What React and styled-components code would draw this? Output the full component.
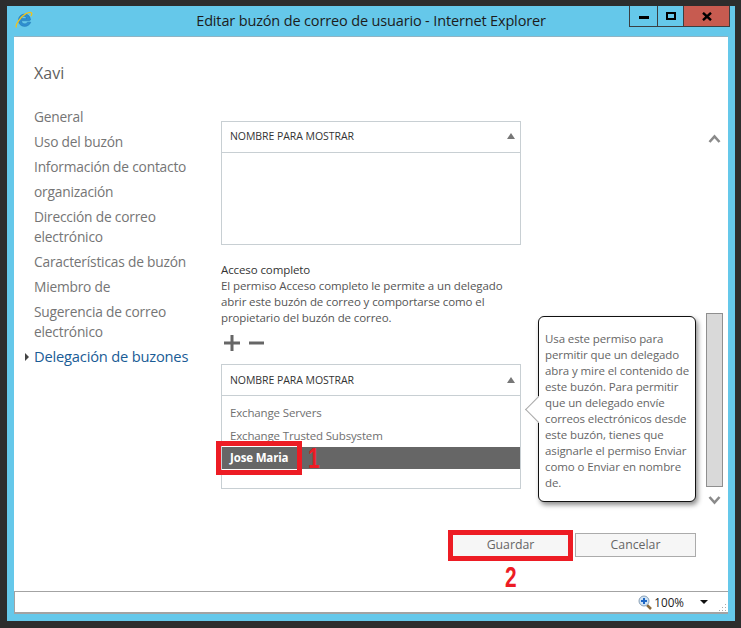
import styled, { createGlobalStyle } from 'styled-components';

const GlobalStyle = createGlobalStyle`
    html, body, #root {
        margin: 0;
        height: 100%;
    }
    body {
        background: #2d2d2d;
        font-family: "Open Sans", "Liberation Sans", sans-serif;
        overflow: hidden;
    }
`;

const Ventana = styled.div`
    box-sizing: border-box;
    width: 728px;
    height: 615px;
    margin: 6px 0 0 7px;
    background: #65c8ea;
    display: flex;
    flex-direction: column;
`;
const BarraTitulo = styled.div`
    height: 30px;
    display: grid;
    grid-template-columns: 1fr auto 1fr;
    align-items: start;
`;
const LogoIE = styled.svg`
    width: 18px;
    height: 18px;
    margin: 5px 0 0 8px;
`;
const TextoTitulo = styled.div`
    font-size: 14.5px;
    line-height: 30px;
    letter-spacing: -0.15px;
    color: #1c1c1c;
`;
const Controles = styled.div`
    justify-self: end;
    display: flex;
    margin-right: 5px;
    height: 21px;
    border: 1px solid #3a3f42;
    border-top: none;
    box-sizing: border-box;
`;
const Control = styled.div`
    width: ${(p) => p.$ancho}px;
    background: ${(p) => (p.$cerrar ? '#c75b50' : 'transparent')};
    border-left: ${(p) => (p.$primero ? 'none' : '1px solid #3a3f42')};
    display: flex;
    align-items: center;
    justify-content: center;
`;
const Panel = styled.div`
    flex: 1;
    margin: 0 7px 0 7px;
    background: #fff;
    border-top: 1px solid #8fb4c4;
    display: flex;
    flex-direction: column;
    min-height: 0;
`;
const Superior = styled.div`
    flex: 1;
    display: flex;
`;
const Lateral = styled.div`
    box-sizing: border-box;
    width: 207px;
    padding: 24px 0 0 20px;
`;
const Nombre = styled.div`
    font-size: 16px;
    line-height: 24px;
    color: #5f5f5f;
`;
const ListaNav = styled.div`
    margin-top: 22px;
    display: flex;
    flex-direction: column;
    gap: 5px;
`;
const ItemNav = styled.div`
    position: relative;
    font-size: ${(p) => (p.$activo ? 14.7 : 13.75)}px;
    line-height: ${(p) => (p.$activo ? 19 : 20)}px;
    letter-spacing: -0.2px;
    width: ${(p) => (p.$activo ? 170 : 160)}px;
    color: ${(p) => (p.$activo ? '#1a5c96' : '#757575')};
    &::before {
        content: ${(p) => (p.$activo ? '""' : 'none')};
        position: absolute;
        left: -9px;
        top: 6px;
        border-left: 4px solid #444;
        border-top: 4px solid transparent;
        border-bottom: 4px solid transparent;
    }
`;
const Central = styled.div`
    position: relative;
    width: 300px;
    padding-top: 84px;
    margin-right: 185px;
`;
const Tabla = styled.div`
    box-sizing: border-box;
    height: ${(p) => p.$alto}px;
    border: 1px solid #c8cfd3;
`;
const Cabecera = styled.div`
    box-sizing: border-box;
    height: ${(p) => p.$alto}px;
    border-bottom: 1px solid #c8cfd3;
    padding: 0 5px ${(p) => p.$abajo || 0}px 8px;
    display: flex;
    align-items: center;
    justify-content: space-between;
    font-size: 10.5px;
    letter-spacing: -0.05px;
    color: #333;
`;
const Triangulo = styled.span`
    border-left: 4px solid transparent;
    border-right: 4px solid transparent;
    border-bottom: 6px solid #777;
`;
const CuerpoTabla = styled.div`
    padding-top: 5px;
`;
const Fila = styled.div`
    position: relative;
    box-sizing: border-box;
    height: ${(p) => (p.$activa ? 22 : 23)}px;
    padding-left: 8px;
    font-size: 11.5px;
    line-height: ${(p) => (p.$activa ? 22 : 23)}px;
    letter-spacing: -0.15px;
    font-weight: ${(p) => (p.$activa ? 700 : 400)};
    background: ${(p) => (p.$activa ? '#666' : 'transparent')};
    color: ${(p) => (p.$activa ? '#fff' : '#707070')};
`;
const Descripcion = styled.div`
    margin-top: 17px;
    font-size: 11.5px;
    line-height: 16px;
    letter-spacing: -0.1px;
    color: #555;
`;
const TituloAcceso = styled.div`
    color: #333;
`;
const Acciones = styled.div`
    margin: 9px 0 13px 3px;
    display: flex;
    gap: 9px;
    height: 16px;
`;
const MarcaRoja = styled.div`
    position: absolute;
    border: 5px solid #ed1c24;
    box-sizing: border-box;
    pointer-events: none;
`;
const MarcaFila = styled(MarcaRoja)`
    left: -6px;
    top: -6px;
    width: 86px;
    height: 34px;
`;
const MarcaBoton = styled(MarcaRoja)`
    left: -3px;
    right: -3px;
    top: -4px;
    bottom: -5px;
`;
const Numero = styled.span`
    position: absolute;
    font-family: "Liberation Sans", sans-serif;
    font-weight: 700;
    font-size: 29px;
    line-height: 29px;
    color: #ed1c24;
    transform: scaleX(0.72);
    transform-origin: left center;
`;
const NumeroFila = styled(Numero)`
    left: 86px;
    top: -3px;
`;
const NumeroBoton = styled(Numero)`
    left: 54px;
    top: 29px;
`;
const Globo = styled.div`
    position: absolute;
    left: 317px;
    top: 279px;
    box-sizing: border-box;
    width: 158px;
    height: 186px;
    padding: 14px 4px 0 6px;
    background: #fff;
    border: 1px solid #111;
    border-radius: 6px;
    box-shadow: 2px 3px 5px rgba(0, 0, 0, 0.45);
    font-size: 11.5px;
    line-height: 16px;
    letter-spacing: -0.1px;
    color: #666;
    &::before {
        content: "";
        position: absolute;
        left: -10px;
        top: 83px;
        width: 18px;
        height: 18px;
        background: #fff;
        border-left: 1px solid #aaa;
        border-bottom: 1px solid #aaa;
        transform: rotate(45deg);
    }
`;
const TextoGlobo = styled.div`
    position: relative;
`;
const ColScroll = styled.div`
    width: 17px;
    padding-top: 96px;
    display: flex;
    flex-direction: column;
    align-items: center;
`;
const Chevron = styled.svg`
    width: 13px;
    height: 12px;
    flex: none;
`;
const Barra = styled.div`
    box-sizing: border-box;
    width: 17px;
    height: 174px;
    margin: 168px 0 7px;
    background: #d9d9d9;
    border: 1px solid #8f8f8f;
`;
const Pie = styled.div`
    display: flex;
    justify-content: flex-end;
    gap: 4px;
    padding: 0 32px 34px 0;
`;
const Boton = styled.div`
    position: relative;
    box-sizing: border-box;
    width: 121px;
    height: 24px;
    background: #f6f6f6;
    border: 1px solid #ababab;
    font-size: 12.3px;
    line-height: 22px;
    text-align: center;
    color: #666;
`;
const BarraEstado = styled.div`
    box-sizing: border-box;
    height: 23px;
    margin: 0 7px 7px 7px;
    background: #fff;
    border: 1px solid #a3a3a3;
    border-bottom-width: 2px;
    border-right: none;
    display: flex;
    align-items: center;
    justify-content: flex-end;
    font-size: 11.7px;
    color: #222;
    position: relative;
`;
const Zoom = styled.svg`
    width: 14px;
    height: 15px;
    margin-right: 2px;
`;
const Desplegar = styled.span`
    margin: 0 20px 0 16px;
    border-left: 4px solid transparent;
    border-right: 4px solid transparent;
    border-top: 4px solid #111;
`;
const Agarre = styled.svg`
    position: absolute;
    right: 1px;
    bottom: 0;
    width: 9px;
    height: 9px;
`;

function Tabla2Filas() {
    return (
        <CuerpoTabla>
            <Fila>Exchange Servers</Fila>
            <Fila>Exchange Trusted Subsystem</Fila>
            <Fila $activa>
                Jose Maria
                <MarcaFila />
                <NumeroFila>1</NumeroFila>
            </Fila>
        </CuerpoTabla>
    );
}

export default function App() {
    const secciones = [
        'General',
        'Uso del buzón',
        'Información de contacto',
        'organización',
        'Dirección de correo electrónico',
        'Características de buzón',
        'Miembro de',
        'Sugerencia de correo electrónico',
    ];

    return (
        <>
            <GlobalStyle />
            <Ventana>
                <BarraTitulo>
                    <LogoIE viewBox="0 0 18 18">
                        <path d="M14.5 9.8H6.4c.2 1.9 1.5 3 3.2 3 1.3 0 2.3-.6 2.9-1.6h3.3c-1 2.6-3.3 4.2-6.2 4.2-3.7 0-6.2-2.7-6.2-6.1 0-3.6 2.7-6.2 6.3-6.2 3.400 0 5.800 2.500 5.800 5.900zM6.500 7.600h5c-.2-1.500-1.200-2.400-2.500-2.400S6.800 6.100 6.500 7.600z" fill="#2f8fd0" stroke="#1a6aa8" strokeWidth=".4" />
                        <path d="M1.500 16.500C-.3 14.500 5.500 5.500 11 2.600c3-1.600 5.600-1.800 5.800-.2.100.8-.3 1.800-1 2.800" fill="none" stroke="#f2c21a" strokeWidth="1.300" />
                    </LogoIE>
                    <TextoTitulo>Editar buzón de correo de usuario - Internet Explorer</TextoTitulo>
                    <Controles>
                        <Control $ancho={27} $primero>
                            <svg width="10" height="8" viewBox="0 0 10 8"><rect x="0" y="4" width="10" height="3" fill="#000" /></svg>
                        </Control>
                        <Control $ancho={25}>
                            <svg width="10" height="8" viewBox="0 0 10 8"><rect x="1" y="1" width="8" height="6" fill="none" stroke="#000" strokeWidth="2" /></svg>
                        </Control>
                        <Control $ancho={45} $cerrar>
                            <svg width="10" height="9" viewBox="0 0 10 9"><path d="M1 .8l8 7.400M9 .8L1 8.200" stroke="#000" strokeWidth="2.400" /></svg>
                        </Control>
                    </Controles>
                </BarraTitulo>
                <Panel>
                    <Superior>
                        <Lateral>
                            <Nombre>Xavi</Nombre>
                            <ListaNav>
                                {secciones.map((s) => (
                                    <ItemNav key={s}>{s}</ItemNav>
                                ))}
                                <ItemNav $activo>Delegación de buzones</ItemNav>
                            </ListaNav>
                        </Lateral>
                        <Central>
                            <Tabla $alto={124}>
                                <Cabecera $alto={31} $abajo={2}>
                                    NOMBRE PARA MOSTRAR
                                    <Triangulo />
                                </Cabecera>
                            </Tabla>
                            <Descripcion>
                                <TituloAcceso>Acceso completo</TituloAcceso>
                                El permiso Acceso completo le permite a un delegado abrir este buzón de correo y comportarse como el propietario del buzón de correo.
                            </Descripcion>
                            <Acciones>
                                <svg width="16" height="16" viewBox="0 0 16 16"><path d="M8 0v16M0 8h16" stroke="#666" strokeWidth="3" /></svg>
                                <svg width="15" height="16" viewBox="0 0 15 16"><path d="M0 8h15" stroke="#666" strokeWidth="3" /></svg>
                            </Acciones>
                            <Tabla $alto={125}>
                                <Cabecera $alto={31}>
                                    NOMBRE PARA MOSTRAR
                                    <Triangulo />
                                </Cabecera>
                                <Tabla2Filas />
                            </Tabla>
                            <Globo>
                                <TextoGlobo>
                                    Usa este permiso para permitir que un delegado abra y mire el contenido de este buzón. Para permitir que un delegado envíe correos electrónicos desde este buzón, tienes que asignarle el permiso Enviar como o Enviar en nombre de.
                                </TextoGlobo>
                            </Globo>
                        </Central>
                        <ColScroll>
                            <Chevron viewBox="0 0 13 12"><path d="M1.500 9L6.500 3.500 11.500 9" fill="none" stroke="#8a8a8a" strokeWidth="2.600" /></Chevron>
                            <Barra />
                            <Chevron viewBox="0 0 13 12"><path d="M1.500 3L6.500 8.500 11.500 3" fill="none" stroke="#8a8a8a" strokeWidth="2.600" /></Chevron>
                        </ColScroll>
                    </Superior>
                    <Pie>
                        <Boton>
                            Guardar
                            <MarcaBoton />
                            <NumeroBoton>2</NumeroBoton>
                        </Boton>
                        <Boton>Cancelar</Boton>
                    </Pie>
                </Panel>
                <BarraEstado>
                    <Zoom viewBox="0 0 14 15">
                        <path d="M9 10l4 4" stroke="#8a6a3a" strokeWidth="2.500" />
                        <circle cx="6" cy="6" r="5" fill="#cfe3f5" stroke="#8aa0b5" />
                        <path d="M6 3v6M3 6h6" stroke="#1d66c4" strokeWidth="2" />
                    </Zoom>
                    100%
                    <Desplegar />
                    <Agarre viewBox="0 0 9 9">
                        <path d="M7 1h1v1H7zM4 4h1v1H4zM7 4h1v1H7zM1 7h1v1H1zM4 7h1v1H4zM7 7h1v1H7z" fill="#aaa" />
                    </Agarre>
                </BarraEstado>
            </Ventana>
        </>
    );
}
